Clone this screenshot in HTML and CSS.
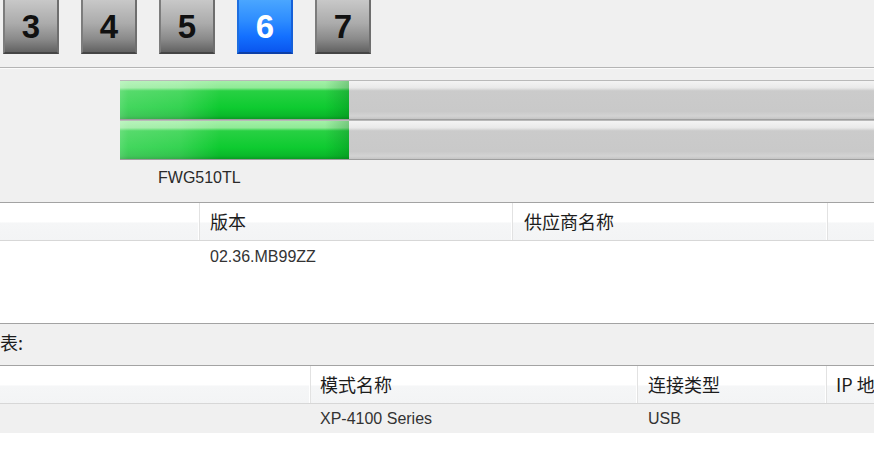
FILE: index.html
```html
<!DOCTYPE html>
<html lang="zh-CN">
<head>
<meta charset="utf-8">
<title>固件信息</title>
<link rel="stylesheet" href="styles.css">
</head>
<body>
<div class="screen">
  <div class="tabs">
    <div class="tab">3</div>
    <div class="tab">4</div>
    <div class="tab">5</div>
    <div class="tab active">6</div>
    <div class="tab">7</div>
  </div>

  <div class="levels">
    <div class="bars">
      <div class="bar"><div class="fill" style="width:229px"></div></div>
      <div class="bar"><div class="fill" style="width:229px"></div></div>
    </div>
    <div class="level-label">FWG510TL</div>
  </div>

  <div class="grid grid-fw">
    <div class="head">
      <div class="hc fw1"></div>
      <div class="hc fw2">版本</div>
      <div class="hc fw3">供应商名称</div>
      <div class="hc fw4"></div>
    </div>
    <div class="row">
      <div class="cell fw1"></div>
      <div class="cell fw2">02.36.MB99ZZ</div>
      <div class="cell fw3"></div>
      <div class="cell fw4"></div>
    </div>
  </div>

  <div class="caption">表:</div>

  <div class="grid grid-dev">
    <div class="head">
      <div class="hc dv1"></div>
      <div class="hc dv2">模式名称</div>
      <div class="hc dv3">连接类型</div>
      <div class="hc dv4">IP 地址</div>
    </div>
    <div class="row row-sel">
      <div class="cell dv1"></div>
      <div class="cell dv2">XP-4100 Series</div>
      <div class="cell dv3">USB</div>
      <div class="cell dv4"></div>
    </div>
  </div>
</div>
</body>
</html>
```

FILE: styles.css
```css
html, body {
  margin: 0;
  padding: 0;
}
body {
  background: #f0f0f0;
  font-family: "Liberation Sans", Arial, "Noto Sans CJK SC", sans-serif;
  color: #222;
}
.screen {
  width: 874px;
  height: 470px;
  overflow: hidden;
  display: flex;
  flex-direction: column;
}

/* number tabs */
.tabs {
  display: flex;
  gap: 22px;
  padding-left: 3px;
  height: 54px;
  margin-bottom: 13px;
  flex: none;
}
.tab {
  width: 56px;
  height: 54px;
  box-sizing: border-box;
  display: flex;
  align-items: center;
  justify-content: center;
  font-family: "Liberation Sans", Arial, sans-serif;
  font-weight: bold;
  font-size: 33px;
  color: #111;
  background: linear-gradient(to bottom, #c8c8c8 0%, #ababab 45%, #8a8a8a 75%, #626262 100%);
  border-left: 2px solid #7c7c7c;
  border-right: 2px solid #6e6e6e;
  border-bottom: 2px solid #454545;
  padding-top: 1px;
}
.tab.active {
  color: #fff;
  background: linear-gradient(to bottom, #4aa6ff 0%, #2d8cff 40%, #1370ff 70%, #0a55ee 100%);
  border-left-color: #1d6ee0;
  border-right-color: #1560d8;
  border-bottom-color: #0d3fa8;
}

/* level bars */
.levels {
  flex: none;
  height: 135px;
  box-sizing: border-box;
  border-top: 1px solid #b4b4b4;
  box-shadow: inset 0 1px 0 #fbfbfb;
  padding: 12px 0 0 120px;
}
.bars {
  display: flex;
  flex-direction: column;
}
.bar {
  height: 40px;
  box-sizing: border-box;
  border-top: 1px solid #b9b9b9;
  border-bottom: 1px solid #9e9e9e;
  background: linear-gradient(to bottom, #f4f4f4 0%, #e9e9e9 18%, #cbcbcb 26%, #c9c9c9 80%, #d3d3d3 92%, #c4c4c4 100%);
}
.fill {
  height: 100%;
  background:
    linear-gradient(to right, rgba(255,255,255,0.30) 0px, rgba(255,255,255,0.22) 8px, rgba(255,255,255,0.16) 60px, rgba(255,255,255,0) 100px, rgba(255,255,255,0) 205px, rgba(0,90,20,0.25) 229px),
    linear-gradient(to bottom, #a4f0a8 0%, #8fea96 18%, #28d043 26%, #0ecb30 70%, #0ab82a 92%, #089c22 100%);
}
.level-label {
  margin: 8px 0 0 38px;
  font-size: 16px;
  line-height: 20px;
  color: #2a2a2a;
}

/* grids */
.grid {
  background: #fff;
  border-top: 1px solid #a3a3a3;
  flex: none;
}
.grid-fw {
  height: 120px;
}
.grid-dev {
  flex: 1;
}
.head {
  display: flex;
  height: 37px;
  border-bottom: 1px solid #d7d7d7;
  background: linear-gradient(to bottom, #ffffff 0%, #ffffff 50%, #f5f6f7 55%, #f3f4f5 100%);
}
.hc {
  box-sizing: border-box;
  border-right: 1px solid #e2e2e2;
  box-shadow: inset -1px 0 0 #fff;
  font-family: "Noto Sans CJK SC", "Liberation Sans", sans-serif;
  font-size: 18px;
  line-height: 37px;
  color: #1c1c1c;
  white-space: nowrap;
  overflow: hidden;
  flex: none;
}
.row {
  display: flex;
  height: 32px;
}
.row-sel {
  height: 29px;
  background: #f0f0f0;
}
.cell {
  box-sizing: border-box;
  font-size: 16px;
  line-height: 32px;
  color: #333;
  white-space: nowrap;
  flex: none;
}
.row-sel .cell {
  line-height: 30px;
}

.fw1 { width: 200px; }
.fw2 { width: 313px; padding-left: 10px; }
.fw3 { width: 315px; padding-left: 11px; }
.fw4 { width: 60px; }

.dv1 { width: 311px; }
.dv2 { width: 327px; padding-left: 9px; }
.dv3 { width: 189px; padding-left: 10px; }
.dv4 { width: 60px; padding-left: 9px; }

/* caption */
.caption {
  flex: none;
  height: 42px;
  box-sizing: border-box;
  border-top: 1px solid #a3a3a3;
  background: #f0f0f0;
  font-family: "Noto Sans CJK SC", "Liberation Sans", sans-serif;
  font-size: 18px;
  line-height: 37px;
  color: #1c1c1c;
  padding-left: 0;
}
```
